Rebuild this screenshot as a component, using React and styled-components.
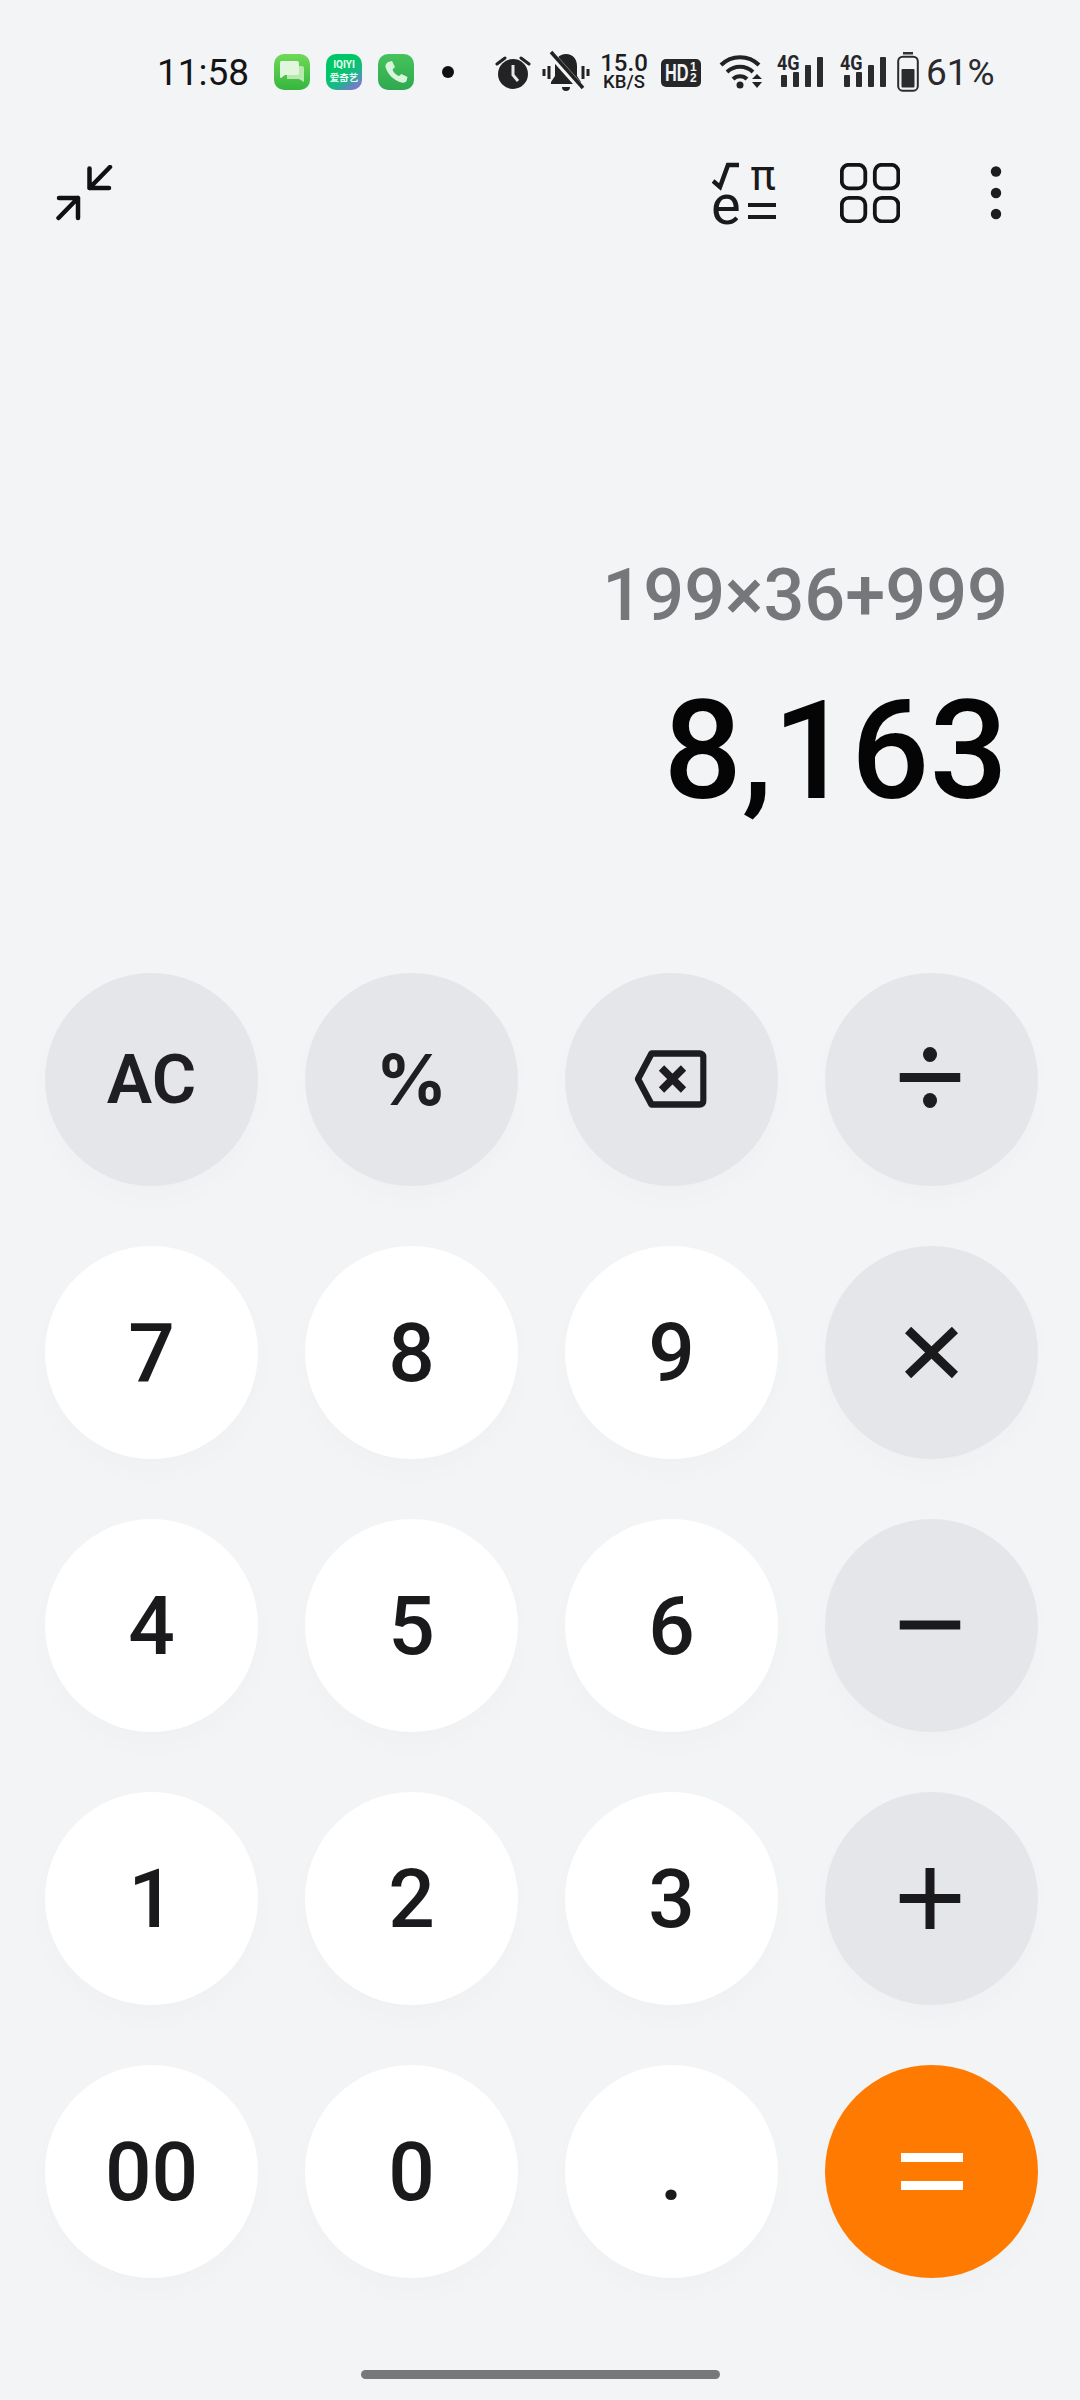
import React from "react";
import styled, { createGlobalStyle } from "styled-components";

const Global = createGlobalStyle`
  html, body { margin: 0; padding: 0; background: #f3f4f6; }
  * { box-sizing: border-box; }
`;

const Page = styled.div`
  width: 1080px;
  height: 2400px;
  background: #f3f4f6;
  color: #1a1a1c;
  font-family: Roboto, "Noto Sans", sans-serif;
  display: flex;
  flex-direction: column;
  position: relative;
`;

const StatusBar = styled.div`
  height: 145px;
  padding: 0 0 1px 157px;
  display: flex;
  align-items: center;
  flex: none;
`;

const StatusRow = styled.div`
  display: flex;
  align-items: center;
  height: 50px;
`;

const Clock = styled.span`
  font-size: 37px;
  line-height: 1;
  width: 117px;
  color: #141416;
`;

const AppIcon = styled.div`
  width: 36px;
  height: 36px;
  border-radius: 10px;
  margin-right: 16px;
  display: flex;
  flex-direction: column;
  align-items: center;
  justify-content: center;
  background: ${(p) => p.$bg};
  flex: none;
`;

const TinyBrand = styled.span`
  color: #e8fff3;
  font-size: ${(p) => p.$size}px;
  line-height: ${(p) => p.$line}px;
  font-weight: 700;
  font-family: Roboto, "Noto Sans CJK SC", sans-serif;
  white-space: nowrap;
`;

const Dot = styled.i`
  display: block;
  width: 12px;
  height: 12px;
  border-radius: 50%;
  background: #111;
  margin: 0 ${(p) => p.$right}px 0 ${(p) => p.$left}px;
`;

const StatusSvg = styled.svg`
  flex: none;
  margin-right: ${(p) => p.$after || 0}px;
`;

const Speed = styled.div`
  width: 50px;
  margin: 0 12px 0 8px;
  display: flex;
  flex-direction: column;
  align-items: center;
  color: #1d1d1f;
  font-weight: 500;
`;

const SpeedValue = styled.span`
  font-size: 24px;
  line-height: 20px;
`;

const SpeedUnit = styled.span`
  font-size: 18.500px;
  line-height: 18px;
`;

const HdBadge = styled.div`
  width: 40px;
  height: 28px;
  border-radius: 5px;
  background: #27272a;
  color: #f3f4f6;
  display: flex;
  align-items: center;
  padding-left: 4px;
  font-weight: 700;
  font-family: "Liberation Sans", sans-serif;
  margin: 2px 18px 0 0;
`;

const HdText = styled.span`
  font-size: 24px;
  transform: scaleX(0.68);
  transform-origin: left center;
  width: 25px;
  white-space: nowrap;
`;

const HdFraction = styled.span`
  display: flex;
  flex-direction: column;
  align-items: center;
  font-size: 12px;
  line-height: 11px;
`;

const Signal = styled.div`
  width: 46px;
  height: 32px;
  margin: 0 ${(p) => p.$gap}px 2px 0;
  display: flex;
  align-items: flex-end;
  position: relative;
  flex: none;
`;

const SignalLabel = styled.span`
  position: absolute;
  left: 0;
  top: -2px;
  font-size: 20px;
  line-height: 20px;
  font-weight: 700;
  transform: scaleX(0.9);
  transform-origin: left top;
  color: #26262a;
`;

const SignalBars = styled.div`
  width: 100%;
  display: flex;
  align-items: flex-end;
  justify-content: flex-end;
  gap: 6px;
`;

const SignalBar = styled.i`
  display: block;
  width: 6px;
  height: ${(p) => p.$h}px;
  background: #2b2b2e;
  border-radius: 1px;
`;

const BatteryText = styled.span`
  font-size: 37px;
  line-height: 1;
  margin-left: 7px;
  color: #2a2a2d;
`;

const Toolbar = styled.div`
  height: 96px;
  padding: 0 78px 0 55px;
  display: flex;
  align-items: flex-start;
  flex: none;
`;

const ToolGroup = styled.div`
  margin-left: auto;
  display: flex;
  align-items: flex-start;
`;

const ToolSvg = styled.svg`
  flex: none;
  margin-top: ${(p) => p.$top}px;
  margin-right: ${(p) => p.$after || 0}px;
`;

const Display = styled.div`
  height: 732px;
  padding: 0 72px 0 0;
  display: flex;
  flex-direction: column;
  align-items: flex-end;
  flex: none;
`;

const Expression = styled.div`
  margin-top: 303px;
  height: 103px;
  font-size: 72px;
  line-height: 103px;
  color: #76777a;
  font-weight: 500;
`;

const Result = styled.div`
  margin-top: 24px;
  height: 160px;
  font-size: 138px;
  line-height: 160px;
  color: #050506;
  font-weight: 500;
`;

const Keypad = styled.div`
  display: grid;
  grid-template-columns: repeat(4, 213px);
  grid-auto-rows: 213px;
  column-gap: 47px;
  row-gap: 60px;
  padding-left: 45px;
`;

const Key = styled.div`
  width: 213px;
  height: 213px;
  border-radius: 50%;
  display: flex;
  align-items: center;
  justify-content: center;
  background: ${(p) => (p.$kind === "op" ? "#e5e6ea" : p.$kind === "eq" ? "#ff7a00" : "#ffffff")};
  box-shadow: 0 14px 30px rgba(40, 50, 70, 0.014);
  color: #1a1a1c;
  font-size: 82px;
  font-weight: 500;
  line-height: 1;
`;

const KeyWord = styled.span`
  font-size: ${(p) => p.$size}px;
  font-weight: ${(p) => p.$weight};
  font-family: ${(p) => p.$font};
  color: #1f1f21;
`;

const KeyGlyph = styled.svg`
  flex: none;
  transform: translate(${(p) => p.$dx || 0}px, ${(p) => p.$dy || 0}px);
`;

const HomeBar = styled.div`
  position: absolute;
  left: 361px;
  top: 2370px;
  width: 359px;
  height: 9px;
  border-radius: 5px;
  background: #77787a;
`;

const Alarm = () => (
  <StatusSvg $after={10} width="36" height="40" viewBox="0 0 36 40">
    <circle cx="18" cy="22" r="15" fill="#232326" />
    <path d="M18 13v10l5 6" stroke="#e6e7ea" strokeWidth="3" fill="none" />
    <path d="M2 12l8-6M34 12l-8-6" stroke="#232326" strokeWidth="3" strokeLinecap="round" />
  </StatusSvg>
);

const MutedBell = () => (
  <StatusSvg width="50" height="44" viewBox="0 0 50 44">
    <path d="M3 19v7" stroke="#222" strokeWidth="3" />
    <path d="M8 16v13" stroke="#222" strokeWidth="3" />
    <path d="M42 16v13M47 19v7" stroke="#222" strokeWidth="3" />
    <path d="M25 4c-7 0-11 5-11 12v10l-4 6v2h30v-2l-4-6V16c0-7-4-12-11-12z" fill="#222" />
    <path d="M21 37a4 4 0 0 0 8 0z" fill="#222" />
    <path d="M9 3l32 36" stroke="#f3f4f6" strokeWidth="7" />
    <path d="M10 2l32 36" stroke="#222" strokeWidth="3.500" />
  </StatusSvg>
);

const Wifi = () => (
  <StatusSvg $after={14} width="44" height="36" viewBox="0 0 44 36">
    <path d="M2 11a27 27 0 0 1 38 0" stroke="#222" strokeWidth="4" fill="none" />
    <path d="M8 18a19 19 0 0 1 26 0" stroke="#222" strokeWidth="4" fill="none" />
    <path d="M14 25a10 10 0 0 1 14 0" stroke="#222" strokeWidth="4" fill="none" />
    <circle cx="21" cy="31" r="3.500" fill="#222" />
    <path d="M33 25l5-5 5 5zM33 28l5 6 5-6z" fill="#222" />
  </StatusSvg>
);

const Battery = () => (
  <StatusSvg width="22" height="40" viewBox="0 0 22 40">
    <rect x="6" y="0" width="10" height="2.500" fill="#333" />
    <rect x="1.200" y="4.700" width="19.600" height="34" rx="4.500" fill="none" stroke="#2c2c2f" strokeWidth="2" />
    <rect x="4.500" y="17" width="13" height="18.500" rx="1" fill="#2c2c2f" />
  </StatusSvg>
);

const Collapse = () => (
  <ToolSvg $top={20} width="58" height="56" viewBox="0 0 58 56">
    <path d="M55 2L34.500 23M34.500 3.500V23H54" stroke="#111" strokeWidth="4.500" fill="none" strokeLinecap="round" strokeLinejoin="round" />
    <path d="M3.500 53L23 33M4 33H23V53" stroke="#111" strokeWidth="4.500" fill="none" strokeLinecap="round" strokeLinejoin="round" />
  </ToolSvg>
);

const Scientific = () => (
  <ToolSvg $top={4} $after={62} width="66" height="90" viewBox="0 -14 66 90">
    <path d="M1 18l7 6 8-22h11" stroke="#1a1a1c" strokeWidth="4.500" fill="none" />
    <text x="51" y="27" fontFamily="Roboto, sans-serif" fontSize="42" fontWeight="400" fill="#1a1a1c" textAnchor="middle">π</text>
    <text x="-1" y="61" fontFamily="Roboto, sans-serif" fontSize="56" fontWeight="400" fill="#1a1a1c">e</text>
    <path d="M36 42h28M36 54h28" stroke="#1a1a1c" strokeWidth="4" />
  </ToolSvg>
);

const Grid = () => (
  <ToolSvg $top={18} $after={90} width="60" height="60" viewBox="0 0 60 60">
    {[[1.800, 1.800], [34.800, 1.800], [1.800, 34.800], [34.800, 34.800]].map(([x, y]) => (
      <rect key={`${x}-${y}`} x={x} y={y} width="23.500" height="23.500" rx="7" fill="none" stroke="#141416" strokeWidth="3.800" />
    ))}
  </ToolSvg>
);

const More = () => (
  <ToolSvg $top={20} width="12" height="56" viewBox="0 0 12 56">
    <circle cx="6" cy="6.500" r="5.200" fill="#1d1d1f" />
    <circle cx="6" cy="28" r="5.200" fill="#1d1d1f" />
    <circle cx="6" cy="49" r="5.200" fill="#1d1d1f" />
  </ToolSvg>
);

const Backspace = () => (
  <KeyGlyph $dx={-1.500} $dy={-1} width="72" height="58" viewBox="0 0 72 58">
    <path d="M17 3.500h48a4 4 0 0 1 4 4v43a4 4 0 0 1-4 4H17L3.500 29z" fill="none" stroke="#1d1d1f" strokeWidth="6.500" strokeLinejoin="round" />
    <path d="M27 18l22 22M49 18L27 40" stroke="#1d1d1f" strokeWidth="7.500" />
  </KeyGlyph>
);

const Divide = () => (
  <KeyGlyph $dx={-1.500} $dy={-2.500} width="61" height="62" viewBox="0 0 61 62">
    <rect x="0" y="26.500" width="61" height="9" fill="#1d1d1f" />
    <ellipse cx="30.500" cy="8" rx="7" ry="7.500" fill="#1d1d1f" />
    <ellipse cx="30.500" cy="54" rx="7" ry="7.500" fill="#1d1d1f" />
  </KeyGlyph>
);

const Times = () => (
  <KeyGlyph $dx={0} $dy={0} width="53" height="51" viewBox="0 0 53 51">
    <path d="M3 3l47 45M50 3L3 48" stroke="#1a1a1c" strokeWidth="9" />
  </KeyGlyph>
);

const Minus = () => (
  <KeyGlyph $dx={-1.500} $dy={-1} width="61" height="10" viewBox="0 0 61 10">
    <rect width="61" height="9" y="0.500" fill="#1a1a1c" />
  </KeyGlyph>
);

const Plus = () => (
  <KeyGlyph $dx={-1.500} $dy={0} width="61" height="61" viewBox="0 0 61 61">
    <path d="M0 30.500h61M30.500 0v61" stroke="#1a1a1c" strokeWidth="9" />
  </KeyGlyph>
);

const Equals = () => (
  <KeyGlyph width="62" height="37" viewBox="0 0 62 37">
    <rect y="0" width="62" height="9" fill="#fff" />
    <rect y="28" width="62" height="9" fill="#fff" />
  </KeyGlyph>
);

const keys = [
  { id: "ac", kind: "op", node: <KeyWord $size={68} $weight={600} $font="Roboto, sans-serif">AC</KeyWord> },
  { id: "pct", kind: "op", node: <KeyWord $size={70} $weight={700} $font="Inter, sans-serif">%</KeyWord> },
  { id: "back", kind: "op", node: <Backspace /> },
  { id: "div", kind: "op", node: <Divide /> },
  { id: "7", node: "7" },
  { id: "8", node: "8" },
  { id: "9", node: "9" },
  { id: "mul", kind: "op", node: <Times /> },
  { id: "4", node: "4" },
  { id: "5", node: "5" },
  { id: "6", node: "6" },
  { id: "sub", kind: "op", node: <Minus /> },
  { id: "1", node: "1" },
  { id: "2", node: "2" },
  { id: "3", node: "3" },
  { id: "add", kind: "op", node: <Plus /> },
  { id: "00", node: "00" },
  { id: "0", node: "0" },
  { id: "dot", node: "." },
  { id: "eq", kind: "eq", node: <Equals /> },
];

const SignalMeter = ({ gap }) => (
  <Signal $gap={gap}>
    <SignalLabel>4G</SignalLabel>
    <SignalBars>
      <SignalBar $h={12} />
      <SignalBar $h={15} />
      <SignalBar $h={22} />
      <SignalBar $h={30} />
    </SignalBars>
  </Signal>
);

export default function App() {
  return (
    <Page>
      <Global />
      <StatusBar>
        <StatusRow>
          <Clock>11:58</Clock>
          <AppIcon $bg="linear-gradient(180deg,#6fd957,#35b63f)">
            <svg width="26" height="24" viewBox="0 0 26 24">
              <path d="M8 6h15a2 2 0 0 1 2 2v14l-5-3H8z" fill="#b7e8ae" />
              <path d="M2 1h16a2 2 0 0 1 2 2v10a2 2 0 0 1-2 2H6l-4 3a1 1 0 0 1-1-1V3a2 2 0 0 1 1-2z" fill="#e2f6dd" />
            </svg>
          </AppIcon>
          <AppIcon $bg="linear-gradient(145deg,#00c765 40%,#1db58c 65%,#a45cf0)">
            <TinyBrand $size={10} $line={12}>IQIYI</TinyBrand>
            <TinyBrand $size={9.500} $line={14}>爱奇艺</TinyBrand>
          </AppIcon>
          <AppIcon $bg="linear-gradient(180deg,#46c35b,#2fa84f)">
            <svg width="26" height="26" viewBox="0 0 26 26">
              <path d="M5 3l4-1 3 6-2.500 2.500c1 3 3.500 5.500 6.500 6.500L18.500 15l6 3-1 4c-1 1.500-3 2-5 1.500C10 21 4.500 15 2.500 8c-.5-2 1-4 2.500-5z" fill="#d8f5dc" />
            </svg>
          </AppIcon>
          <Dot $left={12} $right={41} />
          <Alarm />
          <MutedBell />
          <Speed>
            <SpeedValue>15.0</SpeedValue>
            <SpeedUnit>KB/S</SpeedUnit>
          </Speed>
          <HdBadge>
            <HdText>HD</HdText>
            <HdFraction>
              <span>1</span>
              <span>2</span>
            </HdFraction>
          </HdBadge>
          <Wifi />
          <SignalMeter gap={17} />
          <SignalMeter gap={11} />
          <Battery />
          <BatteryText>61%</BatteryText>
        </StatusRow>
      </StatusBar>
      <Toolbar>
        <Collapse />
        <ToolGroup>
          <Scientific />
          <Grid />
          <More />
        </ToolGroup>
      </Toolbar>
      <Display>
        <Expression>199×36+999</Expression>
        <Result>8,163</Result>
      </Display>
      <Keypad>
        {keys.map((k) => (
          <Key key={k.id} $kind={k.kind}>
            {k.node}
          </Key>
        ))}
      </Keypad>
      <HomeBar />
    </Page>
  );
}
